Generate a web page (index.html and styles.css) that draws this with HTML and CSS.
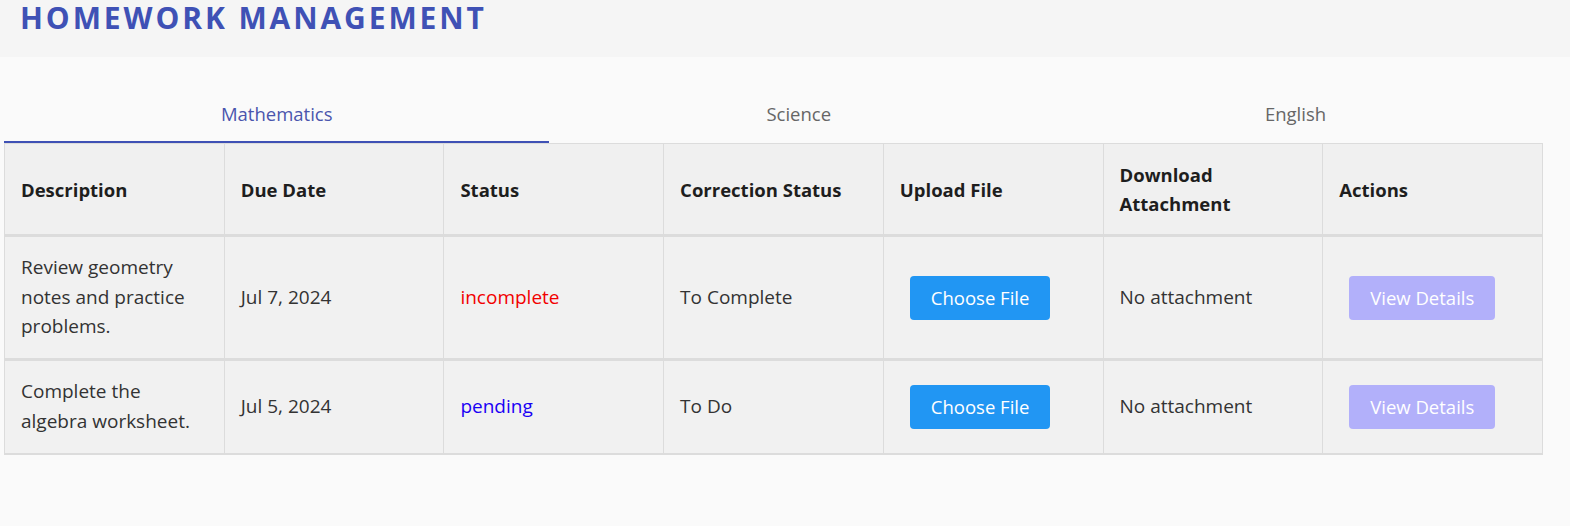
FILE: index.html
```html
<!DOCTYPE html>
<html>
<head>
<meta charset="utf-8">
<link rel="stylesheet" href="styles.css">
</head>
<body>
<header class="topbar">
  <h1 class="title">HOMEWORK MANAGEMENT</h1>
</header>
<main class="main">
  <nav class="tabs">
    <div class="tab tab-active">Mathematics</div>
    <div class="tab">Science</div>
    <div class="tab">English</div>
  </nav>
  <table class="hw-table">
    <thead>
      <tr>
        <th>Description</th>
        <th>Due Date</th>
        <th>Status</th>
        <th>Correction Status</th>
        <th>Upload File</th>
        <th>Download Attachment</th>
        <th>Actions</th>
      </tr>
    </thead>
    <tbody>
      <tr>
        <td>Review geometry notes and practice problems.</td>
        <td>Jul 7, 2024</td>
        <td class="st-incomplete">incomplete</td>
        <td>To Complete</td>
        <td><button class="btn btn-upload">Choose File</button></td>
        <td>No attachment</td>
        <td><button class="btn btn-view">View Details</button></td>
      </tr>
      <tr>
        <td>Complete the algebra worksheet.</td>
        <td>Jul 5, 2024</td>
        <td class="st-pending">pending</td>
        <td>To Do</td>
        <td><button class="btn btn-upload">Choose File</button></td>
        <td>No attachment</td>
        <td><button class="btn btn-view">View Details</button></td>
      </tr>
    </tbody>
  </table>
</main>
</body>
</html>
```

FILE: styles.css
```css
* { box-sizing: border-box; }
html, body {
  margin: 0;
  padding: 0;
  background: #fafafa;
  font-family: "Open Sans", "Noto Sans", sans-serif;
  color: #333;
}
.topbar {
  background: #f5f5f5;
  height: 57px;
  padding: 0 20px;
}
.title {
  margin: 0;
  font-size: 30px;
  line-height: 35px;
  font-weight: 700;
  letter-spacing: 2.9px;
  color: #3f51b5;
}
.main {
  padding: 28px 0 0 4px;
  width: 1543px;
}
.tabs {
  display: flex;
  height: 58px;
}
.tab {
  flex: 1 1 auto;
  display: flex;
  align-items: center;
  justify-content: center;
  font-size: 18.5px;
  color: #666;
  border-bottom: 2px solid transparent;
  padding-top: 1px;
}
.tab-active {
  color: #4a55ad;
  border-bottom-color: #3f51b5;
}
.hw-table {
  width: 100%;
  border-collapse: collapse;
  table-layout: fixed;
  font-size: 19px;
  line-height: 29px;
}
.hw-table th, .hw-table td {
  border: 1px solid #dcdcdc;
  padding: 16px;
  text-align: left;
  vertical-align: middle;
}
.hw-table th {
  background: #f0f0f0;
  font-size: 18.5px;
  font-weight: 700;
  color: #1e1e1e;
}
.hw-table td {
  background: #f1f1f1;
  line-height: 29.7px;
}
.hw-table thead tr, .hw-table tbody tr:first-child {
  border-bottom: 3px solid #dcdcdc;
}
.hw-table tbody tr:last-child td {
  border-bottom: 2px solid #dcdcdc;
}
.st-incomplete { color: #f20000; }
.st-pending { color: #1a00f5; }
.btn {
  font-family: inherit;
  font-size: 18.5px;
  line-height: 24px;
  padding: 10px 21px;
  margin-left: 10px;
  border: none;
  border-radius: 4px;
  color: #fff;
  display: inline-block;
}
.btn-upload { background: #2196f3; }
.btn-view { background: #b2b0fa; }
```
